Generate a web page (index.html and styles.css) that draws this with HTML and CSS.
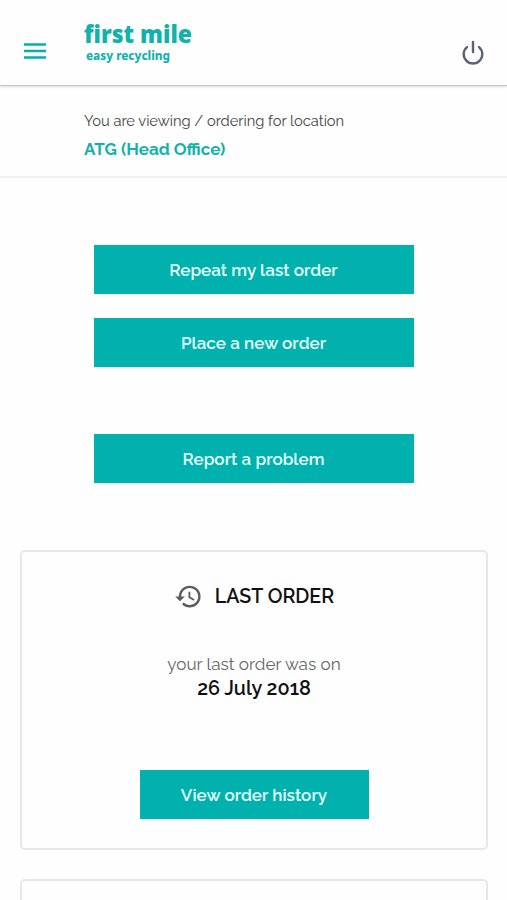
FILE: index.html
```html
<!DOCTYPE html>
<html lang="en">
<head>
<meta charset="utf-8">
<title>First Mile</title>
<link rel="stylesheet" href="styles.css">
</head>
<body>
<header class="header">
  <svg class="menu" viewBox="0 0 22 16"><path d="M0 1.5h22M0 8h22M0 14.5h22"/></svg>
  <svg class="logo" viewBox="0 0 110 54">
    <text class="logo-name" x="0" y="33" textLength="108" lengthAdjust="spacingAndGlyphs">first mile</text>
    <text class="logo-tag" x="2" y="50" textLength="84" lengthAdjust="spacingAndGlyphs">easy recycling</text>
  </svg>
  <svg class="power" viewBox="0 0 24 26"><path d="M12 2v10M6 7.1a9.3 9.3 0 1 0 12 0"/></svg>
</header>
<section class="location">
  <p class="location-label">You are viewing / ordering for location</p>
  <p class="location-name">ATG (Head Office)</p>
</section>
<main>
  <nav class="actions">
    <button class="button">Repeat my last order</button>
    <button class="button place">Place a new order</button>
    <button class="button report">Report a problem</button>
  </nav>
  <section class="card">
    <h2 class="card-title">
      <svg class="history" viewBox="0 0 24 24"><path d="M13 3a9 9 0 0 0-9 9H1l3.89 3.89.07.14L9 12H6c0-3.87 3.13-7 7-7s7 3.13 7 7-3.13 7-7 7c-1.93 0-3.68-.79-4.94-2.06l-1.42 1.42A8.95 8.95 0 0 0 13 21a9 9 0 0 0 0-18zm-1 5v5l4.28 2.54.72-1.21-3.5-2.08V8z"/></svg>
      <span>LAST ORDER</span>
    </h2>
    <p class="order-text">your last order was on</p>
    <p class="order-date">26 July 2018</p>
    <button class="button view">View order history</button>
  </section>
  <section class="card"></section>
</main>
</body>
</html>
```
FILE: styles.css
```css
* { box-sizing: border-box; }
html { overflow: hidden; }
body { margin: 0; height: 900px; overflow: hidden; background: #fefefe; color: #111; font-family: Raleway, Lato, sans-serif; }
p, h2 { margin: 0; }
.header { height: 86px; display: flex; align-items: flex-start; border-bottom: 1px solid #c4c4c4; box-shadow: 0 1px 2px #ddd; }
.menu { width: 22px; height: 16px; margin: 43px 0 0 24px; fill: none; stroke: #00b0ab; stroke-width: 2.4; }
.logo { width: 110px; height: 54px; margin: 10px 0 0 38px; overflow: visible; fill: #12b2ac; font-family: "Noto Sans", sans-serif; }
.logo-name { font-size: 25px; font-weight: 900; }
.logo-tag { font-size: 11.5px; font-weight: 800; }
.power { width: 24px; height: 26px; margin: 39.5px 22px 0 auto; fill: none; stroke: #59647a; stroke-width: 2.4; stroke-linecap: round; }
.location { height: 92px; padding: 22px 0 0 84px; border-bottom: 2px solid #f0f0f0; }
.location-label { font-size: 14.7px; line-height: 26px; color: #444; }
.location-name { font-size: 17px; line-height: 30px; font-weight: 700; color: #12b2ac; }
.actions { display: flex; flex-direction: column; align-items: center; padding-top: 67px; }
.button { width: 320px; height: 49px; padding: 0; border: 0; background: #00b1ad; color: #e6fffd; font: 600 17px/50px Raleway, Lato, sans-serif; letter-spacing: .04px; }
.place { margin-top: 24px; }
.report { margin-top: 67px; }
.card { height: 300px; margin: 67px 19px 0 20px; border: 2px solid #e7e7e7; border-radius: 5px; display: flex; flex-direction: column; align-items: center; }
.card + .card { height: 21px; margin-top: 29px; border-bottom: 0; border-radius: 5px 5px 0 0; }
.card-title { display: flex; align-items: center; gap: 12px; margin-top: 29px; font-size: 19.6px; line-height: 32px; font-weight: 600; }
.history { width: 29px; height: 29px; margin-top: -2px; fill: #5c5c5c; }
.order-text { margin-top: 39px; font-size: 17.1px; line-height: 24px; color: #666; }
.order-date { font-size: 19.8px; line-height: 24px; font-weight: 600; }
.view { width: 229px; margin-top: 70px; }
```
